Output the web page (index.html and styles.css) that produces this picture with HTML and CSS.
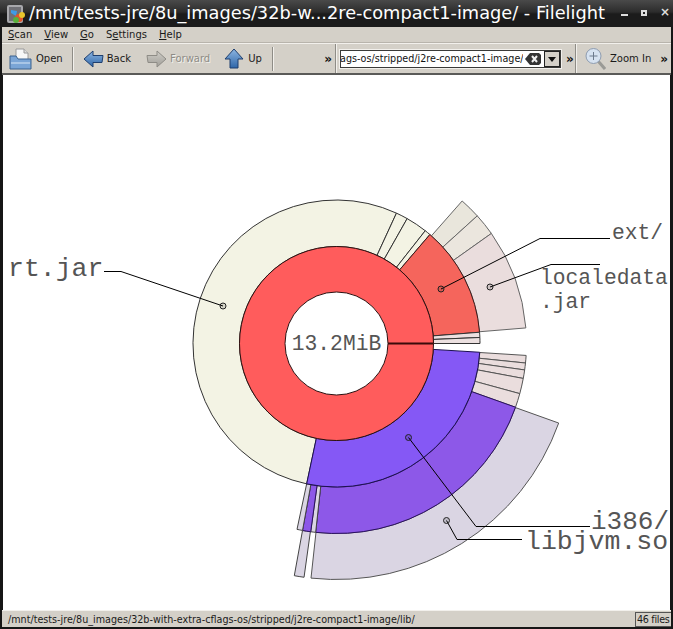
FILE: index.html
```html
<!DOCTYPE html>
<html lang="en">
<head>
<meta charset="UTF-8">
<title>Filelight</title>
<link rel="stylesheet" href="styles.css">
<script src="chart.js"></script>
</head>
<body>
<div class="window">
	<div class="titlebar">
		<svg class="appicon" width="20" height="20" viewBox="0 0 20 20">
			<rect x="1" y="1" width="16" height="18" rx="2" fill="#a8a8ac"/>
			<rect x="3" y="3" width="12" height="14" fill="#707076"/>
			<path d="M5 6l6 1-1 5-5-3z" fill="#3f9be8"/>
			<circle cx="13" cy="14" r="4" fill="#e2542c"/>
			<circle cx="16" cy="11" r="3" fill="#e8c52c"/>
			<circle cx="10" cy="16" r="3" fill="#58b03a"/>
		</svg>
		<div class="title">/mnt/tests-jre/8u_images/32b-w...2re-compact1-image/ - Filelight</div>
		<div class="winbtns">
			<span class="winbtn min"></span>
			<span class="winbtn max"></span>
			<span class="winbtn close">&#215;</span>
		</div>
	</div>
	<div class="menubar">
		<span><u>S</u>can</span>
		<span><u>V</u>iew</span>
		<span><u>G</u>o</span>
		<span>S<u>e</u>ttings</span>
		<span><u>H</u>elp</span>
	</div>
	<div class="toolbar">
		<svg class="defs" width="0" height="0">
			<linearGradient id="blue" x1="0" y1="0" x2="0" y2="1">
				<stop offset="0" stop-color="#8db6e2"/>
				<stop offset="1" stop-color="#2f66a8"/>
			</linearGradient>
			<linearGradient id="grey" x1="0" y1="0" x2="0" y2="1">
				<stop offset="0" stop-color="#d0cec8"/>
				<stop offset="1" stop-color="#a09e98"/>
			</linearGradient>
		</svg>
		<div class="tools main">
			<div class="tool open">
				<svg width="24" height="24" viewBox="0 0 24 24">
					<path d="M7 2h8l4 4v9H7z" fill="#f7f7f7" stroke="#9a9a9a"/>
					<path d="M15 2v4h4" fill="#dcdcdc" stroke="#9a9a9a"/>
					<path d="M1 9h6l2 3h13v10H1z" fill="#7aa5d6" stroke="#3c638f"/>
					<path d="M2 15h19v2H2z" fill="#a9c6e6"/>
				</svg>
				<span>Open</span>
			</div>
			<i class="sep"></i>
			<div class="tool back">
				<svg width="21" height="20" viewBox="0 0 21 20">
					<path d="M1 10l9-8v4.500h10l-1 7H10v4.500z" fill="url(#blue)" stroke="#1f3f6e"/>
				</svg>
				<span>Back</span>
			</div>
			<div class="tool forward">
				<svg width="21" height="20" viewBox="0 0 21 20">
					<path d="M20 10l-9-8v4.500H1l1 7h9v4.500z" fill="url(#grey)" stroke="#8e8c86"/>
				</svg>
				<span>Forward</span>
			</div>
			<div class="tool up">
				<svg width="20" height="21" viewBox="0 0 20 21">
					<path d="M10 1l9 10h-5v9H6v-9H1z" fill="url(#blue)" stroke="#1f3f6e"/>
				</svg>
				<span>Up</span>
			</div>
			<i class="sep"></i>
			<b class="more">&#187;</b>
		</div>
		<div class="tools location">
			<div class="combo">
				<div class="path"><span>ags-os/stripped/j2re-compact1-image/</span></div>
				<svg class="clear" width="16" height="12" viewBox="0 0 16 12">
					<path d="M0 6l5-6h9l2 2v8l-2 2H5z" fill="#333"/>
					<path d="M7 3l5 6M12 3l-5 6" stroke="#eee" stroke-width="2"/>
				</svg>
				<div class="drop"></div>
			</div>
			<b class="more">&#187;</b>
		</div>
		<div class="tools zoom">
			<div class="tool">
				<svg width="21" height="24" viewBox="0 0 21 24">
					<path d="M13 14l7 8" stroke="#9a9a96" stroke-width="3"/>
					<circle cx="8.500" cy="9" r="7.500" fill="#d6e2f0" stroke="#8e9cb0"/>
					<path d="M8.500 5v8M4.500 9h8" stroke="#6d7a8c"/>
				</svg>
				<span>Zoom In</span>
			</div>
			<b class="more">&#187;</b>
		</div>
	</div>
	<div class="canvas">
		<svg id="chart" class="chart" width="667" height="535" viewBox="3 75 667 535">
			<g id="rings"></g>
			<g class="leaders">
				<polyline points="223,306 121,271.500 104,271.500"/>
				<polyline points="441,289 540,238.500 610,238.500"/>
				<polyline points="490,287 551,264.500 600,264.500"/>
				<polyline points="408.500,437.500 476,526.500 590,526.500"/>
				<polyline points="446.500,520.500 457,539.500 522,539.500"/>
				<circle cx="223" cy="306" r="3"/>
				<circle cx="441" cy="289" r="3"/>
				<circle cx="490" cy="287" r="3"/>
				<circle cx="408.500" cy="437.500" r="3"/>
				<circle cx="446.500" cy="520.500" r="3"/>
			</g>
			<text class="big" x="8" y="276">rt.jar</text>
			<text class="small" x="612" y="238.500">ext/</text>
			<text class="small" x="540" y="283.500">localedata</text>
			<text class="small" x="540" y="308">.jar</text>
			<text class="big i386" x="591" y="529">i386/</text>
			<text class="big" x="525" y="549">libjvm.so</text>
			<text class="small" x="336.500" y="350" text-anchor="middle">13.2MiB</text>
		</svg>
	</div>
	<div class="statusbar">
		<span class="statuspath">/mnt/tests-jre/8u_images/32b-with-extra-cflags-os/stripped/j2re-compact1-image/lib/</span>
		<span class="files">46 files</span>
	</div>
</div>
</body>
</html>
```

FILE: styles.css
```css
* { padding: 0; margin: 0; box-sizing: border-box; }

html, body { height: 100%; }
body { background: #161616; overflow: hidden; font-family: "DejaVu Sans", sans-serif; }

.window { width: 673px; height: 629px; display: flex; flex-direction: column; }

.titlebar { height: 27px; flex: none; display: flex; align-items: center; padding: 0 0 2px 6px; color: #fff; background: linear-gradient(#4a4a4a 0, #2c2c2c 12px, #1b1b1b 14px, #1b1b1b 100%); }
.appicon { flex: none; margin-top: 2px; }
.title { margin-left: 3px; font-size: 17.75px; white-space: nowrap; }
.winbtns { margin-left: auto; display: flex; align-items: center; gap: 13px; padding-right: 6px; }
.winbtn { width: 7px; height: 7px; display: block; color: #ddd; }
.min { border-bottom: 2px solid #ddd; }
.max { border: 2px solid #ddd; width: 6px; height: 6px; }
.close { font-size: 12px; font-weight: bold; line-height: 7px; }

.menubar { height: 16px; flex: none; margin: 0 2px; display: flex; align-items: center; gap: 12px; padding: 0 6px; background: #d4d0c8; font-size: 10px; color: #1a1a1a; border-bottom: 1px solid #b8b4ac; }

.toolbar { height: 32px; flex: none; margin: 0 2px; display: flex; background: #d4d0c8; border-top: 1px solid #f2f0ec; border-bottom: 2px solid #5a5a58; font-size: 10px; color: #1a1a1a; }
.defs { position: absolute; }
.tools { display: flex; align-items: center; height: 100%; }
.main { width: 334px; padding-left: 7px; border-right: 1px solid #8e8c86; }
.location { width: 240px; padding-left: 2px; border-left: 1px solid #f2f0ec; border-right: 1px solid #8e8c86; }
.zoom { flex: 1; padding-left: 8px; border-left: 1px solid #f2f0ec; }

.tool { display: flex; align-items: center; gap: 3px; }
.forward { color: #8e8c86; text-shadow: 1px 1px 0 #f2f0ec; margin-left: 15px; }
.up { margin-left: 14px; gap: 4px; }
.zoom .tool { gap: 4px; }
.sep { display: block; width: 2px; height: 24px; margin: 0 9px; border-left: 1px solid #8e8c86; border-right: 1px solid #f2f0ec; }
.up + .sep { margin-left: 10px; }
.more { font-size: 12px; color: #111; margin-left: auto; }
.main .more { margin-right: 3px; }

.combo { width: 223px; height: 20px; display: flex; align-items: center; background: #fff; border: 1px solid #f2f0ec; outline: 1px solid #3a3a38; outline-offset: -2px; }
.path { width: 183px; overflow: hidden; white-space: nowrap; font-size: 9.6px; color: #111; }
.clear { flex: none; margin-left: 2px; }
.drop { flex: none; width: 16px; height: 16px; margin-left: 3px; position: relative; background: #d4d0c8; border: 1px solid #222; }
.drop::after { content: ""; position: absolute; left: 3px; top: 5px; border: 4px solid transparent; border-top: 5px solid #111; border-bottom: 0; }
.location .more { margin-left: 4px; }
.zoom .more { margin-right: 3px; }

.canvas { flex: 1; margin-left: 3px; margin-right: 3px; background: #fff; min-height: 0; }
.chart { display: block; }

.leaders polyline { fill: none; stroke: #000; stroke-width: 1; }
.leaders circle { fill: rgba(0, 0, 0, 0.12); stroke: #222; stroke-width: 1; }
.seg { stroke-width: 1; }

text { font-family: "Liberation Mono", monospace; fill: #555; }
.big { font-size: 26.5px; }
.i386 { font-size: 26px; }
.small { font-size: 21.3px; }

.statusbar { height: 17px; flex: none; margin: 0 2px 2px; display: flex; align-items: center; justify-content: space-between; padding-left: 6px; background: #d4d0c8; font-size: 9.6px; color: #1a1a1a; border-top: 1px solid #f2f0ec; }
.files { width: 36px; height: 15px; overflow: hidden; white-space: nowrap; padding-left: 1px; border: 1px solid #555; border-right: 0; line-height: 13px; letter-spacing: -0.3px; }
```

FILE: chart.js
```javascript
// rings as in filelight: radius from/to, then slices [start, end, fill, line]
var CX = 336.5, CY = 343.5;
var RINGS = [
	{ r0: 97, r1: 143.5, segs: [
		[258, 65.3, '#f3f3e4', '#333'],
		[65.3, 60.5, '#f3f3e4', '#333'],
		[60.5, 51.8, '#f3f3e4', '#333'],
		[51.8, 49.4, '#f3f3e4', '#333'],
		[49.4, 4.5, '#f5655c', '#3a1a1a'],
		[4.5, 2.4, '#ece0e0', '#333'],
		[2.4, 0, '#ece0e0', '#333'],
		[-3.5, -102, '#8558f5', '#1c1050']
	]},
	{ r0: 143.5, r1: 190, segs: [
		[48.6, 42.2, '#e9e6dc', '#666'],
		[42.2, 35.4, '#ebe6de', '#666'],
		[35.4, 4.7, '#eadddd', '#666'],
		[-3.6, -5.9, '#eadddd', '#555'],
		[-5.9, -8, '#eadddd', '#555'],
		[-8, -10.6, '#eadddd', '#555'],
		[-10.6, -15.3, '#eadddd', '#555'],
		[-15.3, -19.6, '#eadddd', '#555'],
		[-19.6, -96.3, '#8d58e8', '#2a1060'],
		[-96.3, -97.8, '#dad5e3', '#444'],
		[-97.8, -100.3, '#8d58e8', '#2a1060'],
		[-100.3, -102, '#dad5e3', '#444']
	]},
	{ r0: 190, r1: 236, segs: [
		[-19.7, -96.2, '#dad5e3', '#555'],
		[-97.9, -100.3, '#dad5e3', '#444']
	]}
];

function pt(r, a) {
	var t = a * Math.PI / 180;
	return (CX + r * Math.cos(t)).toFixed(2) + ' ' + (CY - r * Math.sin(t)).toFixed(2);
}

function slice(r0, r1, a0, a1) {
	var large = a0 - a1 > 180 ? 1 : 0;
	return 'M' + pt(r1, a0) + 'A' + r1 + ' ' + r1 + ' 0 ' + large + ' 1 ' + pt(r1, a1) +
		'L' + pt(r0, a1) + 'A' + r0 + ' ' + r0 + ' 0 ' + large + ' 0 ' + pt(r0, a0) + 'Z';
}

function add(g, name, attrs) {
	var el = document.createElementNS('http://www.w3.org/2000/svg', name);
	for (var k in attrs) el.setAttribute(k, attrs[k]);
	g.appendChild(el);
}

window.onload = function(){
	var g = document.getElementById('rings');

	// outer rings first so the inner outlines end up on top
	for (var i = RINGS.length - 1; i >= 0; i--) {
		var ring = RINGS[i];
		for (var j = 0; j < ring.segs.length; j++) {
			var s = ring.segs[j];
			add(g, 'path', { 'class': 'seg', d: slice(ring.r0, ring.r1, s[0], s[1]), fill: s[2], stroke: s[3] });
		}
	}

	// the root: one full red ring, white hole, seam at 0 degrees
	add(g, 'circle', { cx: CX, cy: CY, r: 97, fill: '#ff5c5c', stroke: '#2a1010' });
	add(g, 'circle', { cx: CX, cy: CY, r: 51.5, fill: '#fff', stroke: '#2a1010' });
	add(g, 'line', { x1: CX + 51.5, y1: CY, x2: CX + 97, y2: CY, stroke: '#3a0a0a', 'stroke-width': 2 });
};
```
